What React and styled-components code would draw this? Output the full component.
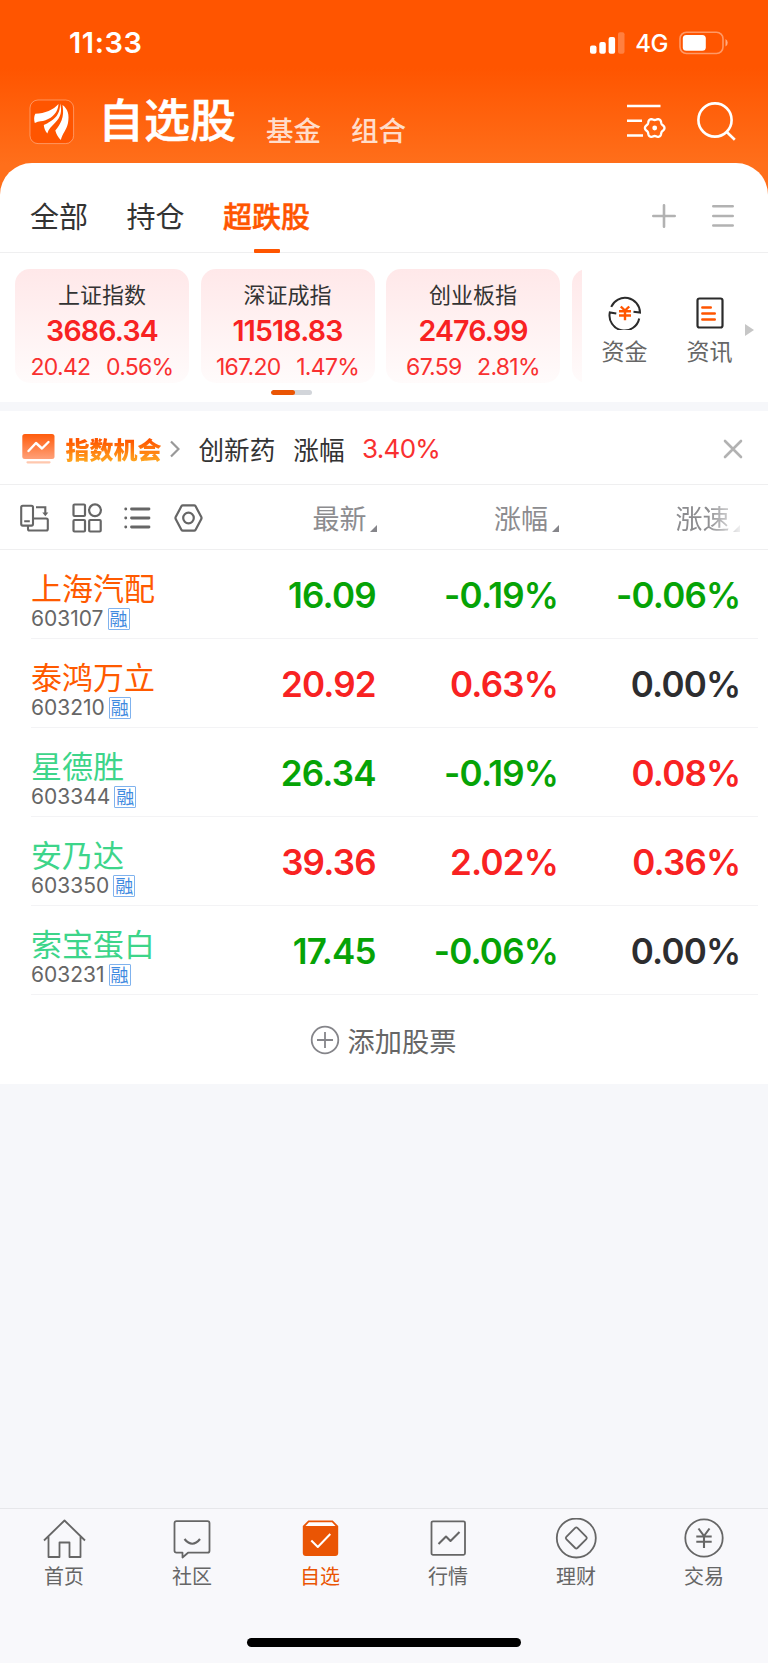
import React from "react";
import styled, { createGlobalStyle } from "styled-components";

const indices = [
  { name: "上证指数", value: "3686.34", change: "20.42", percent: "0.56%" },
  { name: "深证成指", value: "11518.83", change: "167.20", percent: "1.47%" },
  { name: "创业板指", value: "2476.99", change: "67.59", percent: "2.81%" },
];

const stocks = [
  { name: "上海汽配", code: "603107", color: "#ff5a00", values: [["16.09", "down"], ["-0.19%", "down"], ["-0.06%", "down"]] },
  { name: "泰鸿万立", code: "603210", color: "#ff5a00", values: [["20.92", "up"], ["0.63%", "up"], ["0.00%", "flat"]] },
  { name: "星德胜", code: "603344", color: "#3dd58a", values: [["26.34", "down"], ["-0.19%", "down"], ["0.08%", "up"]] },
  { name: "安乃达", code: "603350", color: "#3dd58a", values: [["39.36", "up"], ["2.02%", "up"], ["0.36%", "up"]] },
  { name: "索宝蛋白", code: "603231", color: "#3dd58a", values: [["17.45", "down"], ["-0.06%", "down"], ["0.00%", "flat"]] },
];

const valueColors = { up: "#f82222", down: "#06a306", flat: "#2d2d2f" };

// six-lobed outline of the settings gear
const gearPoints = (cx, cy, r, depth) => {
  const points = [];
  for (let deg = 0; deg < 360; deg += 5) {
    const t = (deg * Math.PI) / 180;
    const radius = r + depth * Math.cos(6 * t);
    points.push(`${(cx + radius * Math.cos(t)).toFixed(2)},${(cy + radius * Math.sin(t)).toFixed(2)}`);
  }
  return points.join(" ");
};

const SignalIcon = () => (
  <svg width="35" height="22" viewBox="0 0 35 22" fill="#fff">
    <rect x="0" y="13.5" width="6.5" height="8.3" rx="2" />
    <rect x="9.3" y="10" width="6.5" height="11.8" rx="2" />
    <rect x="18.6" y="5" width="6.5" height="16.8" rx="2" />
    <rect x="28" y="0.3" width="6.5" height="21.5" rx="2" opacity="0.25" />
  </svg>
);

const BatteryIcon = () => (
  <svg width="50" height="24" viewBox="0 0 50 24">
    <rect x="1" y="1.2" width="43" height="21.3" rx="6.5" fill="none" stroke="#fff" strokeOpacity="0.4" strokeWidth="1.6" />
    <rect x="3.8" y="4" width="23" height="15.8" rx="3.5" fill="#fff" />
    <path d="M46.5 8v7.6q2.2-1 2.2-3.8T46.5 8z" fill="#fff" fillOpacity="0.5" />
  </svg>
);

const LogoIcon = () => (
  <svg width="46" height="46" viewBox="0 0 46 46">
    <rect x="1" y="1" width="43.6" height="43.6" rx="8" fill="#ff5500" stroke="#fff" strokeOpacity="0.35" />
    <g fill="#fff">
      <path d="M6.3 14.8C16 14.3 24.5 11 29.500 5 29 13 24 18.500 16.500 21.300 13 22.500 10 22 5.800 24 4.800 20.500 5 17.500 6.300 14.800z" />
      <path d="M31 4.500C31.500 12 28 18.500 22 22 19 24 17 25 14.800 26c.3 3.200 1.300 6 3.500 8.500 1-4 4.500-7.500 8-11C31.500 18.500 33.500 12 31 4.500z" />
      <path d="M33.500 6C39 10 40.500 16 39 24c-1.500 7-5.500 10.500-7.200 17-2.500-2.500-4.500-5.500-5.500-9.500 5-6 9.500-13 7.200-25.500z" />
    </g>
  </svg>
);

const FilterSettingIcon = () => (
  <svg width="40" height="36" viewBox="0 0 40 36" fill="none" stroke="#fff" strokeWidth="2.6">
    <path d="M0 2h33.5M0 16.8h15M0 31.5h16" />
    <polygon points={gearPoints(27.7, 24, 8.9, 0.9)} strokeWidth="2.3" strokeLinejoin="round" />
    <circle cx="27.7" cy="24" r="2.4" fill="#fff" stroke="none" />
  </svg>
);

const SearchIcon = () => (
  <svg width="40" height="40" viewBox="0 0 40 40" fill="none" stroke="#fff" strokeWidth="2.6">
    <circle cx="18" cy="18" r="16.6" />
    <path d="M29.5 29.8l8.3 8" />
  </svg>
);

const PlusIcon = () => (
  <svg width="24" height="24" viewBox="0 0 24 24" stroke="#b2b2b2" strokeWidth="2.6" strokeLinecap="round">
    <path d="M1.3 12h21.4M12 1.3v21.4" />
  </svg>
);

const MenuIcon = () => (
  <svg width="22" height="24" viewBox="0 0 22 24" stroke="#b2b2b2" strokeWidth="2.6" strokeLinecap="round">
    <path d="M1.3 2.2h19.4M1.3 12h19.4M1.3 21.5h19.4" />
  </svg>
);

const FundIcon = () => (
  <svg width="34" height="34" viewBox="0 0 34 34" fill="none" stroke="#2b2b2b" strokeWidth="2">
    <path d="M3.2 10.9A15 15 0 0 1 32 16.5l-6.5-.8" />
    <path d="M31.2 22.5A15 15 0 0 1 1.8 16.5l6.5 1" />
    <path d="M12.8 10.5l4.200 4L21.200 10.500M11 15.200h12M11 19.500h12M17 14.500v9.800" stroke="#ff5500" strokeWidth="2.400" />
  </svg>
);

const NewsIcon = () => (
  <svg width="28" height="34" viewBox="0 -1 28 34" fill="none">
    <rect x="1.5" y="1.5" width="25" height="29" rx="2" stroke="#2b2b2b" strokeWidth="2.2" />
    <path d="M6.3 10.500h8.500M6.3 16.500h12.500M6.3 22.500h12.500" stroke="#ff5500" strokeWidth="2.400" strokeLinecap="round" />
  </svg>
);

const ChanceIcon = () => (
  <svg width="33" height="30" viewBox="0 0 33 30">
    <defs>
      <linearGradient id="chance" x1="0" y1="0" x2="0" y2="1">
        <stop offset="0" stopColor="#ff5c0c" />
        <stop offset="1" stopColor="#ffa079" />
      </linearGradient>
    </defs>
    <rect x="0.3" y="0" width="32.2" height="25" rx="2.5" fill="url(#chance)" />
    <path d="M6.5 17l7.5-8 6 5.500 6.500-6.500" fill="none" stroke="#fff" strokeWidth="2.4" strokeLinecap="round" strokeLinejoin="round" />
    <path d="M5.5 28.3h22" stroke="#ffc8ae" strokeWidth="2.2" strokeLinecap="round" />
  </svg>
);

const ChevronIcon = () => (
  <svg width="10" height="18" viewBox="0 0 10 18" fill="none" stroke="#999" strokeWidth="2.2">
    <path d="M1 1.500L8.500 9 1 16.500" />
  </svg>
);

const CloseIcon = () => (
  <svg width="20" height="20" viewBox="0 0 20 20" stroke="#b2b2b2" strokeWidth="2.6" strokeLinecap="round">
    <path d="M2 2l16 16M18 2L2 18" />
  </svg>
);

const RotateIcon = () => (
  <svg width="29" height="28" viewBox="0 0 29 28" fill="none" stroke="#666" strokeWidth="2.1">
    <rect x="1.2" y="1.800" width="11.800" height="19.800" rx="1.500" />
    <path d="M4.200 17.300h5.600M16 3.200h9.300v6.500M13.500 14.500H26.300q1.500 0 1.500 1.500v9q0 1.500-1.500 1.500H9.500Q8 26.500 8 25v-3" />
    <path d="M22.300 8.500h6l-3 3.800z" fill="#666" stroke="none" />
  </svg>
);

const GridIcon = () => (
  <svg width="30" height="30" viewBox="0 0 30 30" fill="none" stroke="#666" strokeWidth="2.2">
    <rect x="1.5" y="1.5" width="11.5" height="11.5" rx="1" />
    <circle cx="23" cy="7.3" r="5.9" />
    <rect x="1.5" y="17" width="11.5" height="11.5" rx="1" />
    <rect x="17.2" y="17" width="11.5" height="11.5" rx="1" />
  </svg>
);

const ListIcon = () => (
  <svg width="27" height="24" viewBox="0 0 27 24" stroke="#666" strokeWidth="2.8" strokeLinecap="round">
    <path d="M7.500 3h17.500M7.500 12h17.500M7.500 21h17.500M1.700 3h.1M1.700 12h.1M1.700 21h.1" />
  </svg>
);

const HexIcon = () => (
  <svg width="29" height="28" viewBox="0 0 29 28" fill="none" stroke="#666" strokeWidth="2.2">
    <path d="M8.800 1.300h11.400q.8 0 1.300.8l5.800 10.800q.5 1.100 0 2.200l-5.800 10.800q-.5.800-1.300.8H8.800q-.8 0-1.300-.8L1.700 15.100q-.5-1.100 0-2.200L7.500 2.100q.5-.8 1.300-.8z" />
    <circle cx="14.500" cy="14" r="5.300" />
  </svg>
);

const AddIcon = () => (
  <svg width="30" height="30" viewBox="0 0 30 30" fill="none" stroke="#85858a" strokeWidth="1.8">
    <circle cx="15" cy="15" r="13.300" />
    <path d="M7 15h16M15 7v16" />
  </svg>
);

const HomeIcon = () => (
  <path d="M2 22.500L22.500 2.500 43 22.500M6.500 18.500V39h11V24.500h10V39h11V18.500" />
);

const CommunityIcon = () => (
  <>
    <path d="M6.500 3.200h31q2 0 2 2v27.500q0 2-2 2H18L12.500 39.500v-4.800h-6q-2 0-2-2V5.200q0-2 2-2z" />
    <path d="M14.500 21q7.800 9.500 15.500 0" strokeWidth="2.200" />
  </>
);

const PickIcon = () => (
  <g stroke="none">
    <path d="M10.300 2.500h24.400l5.500 5.500v27q0 3-3 3H7.800q-3 0-3-3V8z" fill="#ea5504" />
    <path d="M11 4.200h23l3.500 3.800h-30z" fill="#fff" />
    <path d="M13.300 22.500l6.500 6.500L32.300 16" fill="none" stroke="#fff" strokeWidth="2" />
  </g>
);

const MarketIcon = () => (
  <>
    <rect x="5.500" y="3.300" width="33.500" height="33.500" rx="1.500" />
    <path d="M12.500 26l7.500-7.500 4.500 4.500 9-9" strokeWidth="2.100" />
  </>
);

const WealthIcon = () => (
  <>
    <circle cx="22.300" cy="20" r="19.500" />
    <path d="M21.200 9.900q1.100-1 2.200 0l8.900 8.900q1.100 1.200 0 2.300l-8.900 8.900q-1.100 1-2.200 0l-8.900-8.900q-1.100-1.100 0-2.300z" />
  </>
);

const TradeIcon = () => (
  <>
    <circle cx="22" cy="20" r="18.700" />
    <path d="M16.500 10.500l5.500 7.500 5.500-7.500M14.300 18.500h15.400M14.300 23.700h15.400M22 18v12" strokeWidth="2.100" />
  </>
);

const navItems = [
  { label: "首页", Icon: HomeIcon },
  { label: "社区", Icon: CommunityIcon },
  { label: "自选", Icon: PickIcon, active: true },
  { label: "行情", Icon: MarketIcon },
  { label: "理财", Icon: WealthIcon },
  { label: "交易", Icon: TradeIcon },
];

const App = () => {
  return (
    <Page>
      <GlobalStyle />
      <Header>
        <StatusBar>
          <Clock>11:33</Clock>
          <SignalIcon />
          <Network>4G</Network>
          <BatteryIcon />
        </StatusBar>
        <TitleBar>
          <LogoIcon />
          <Title>自选股</Title>
          <SubTitle>基金</SubTitle>
          <SubTitle>组合</SubTitle>
          <HeaderIcons>
            <FilterSettingIcon />
            <SearchIcon />
          </HeaderIcons>
        </TitleBar>
      </Header>

      <Sheet>
        <Tabs>
          <Tab>全部</Tab>
          <Tab>持仓</Tab>
          <Tab $active>超跌股</Tab>
          <TabIcons>
            <PlusIcon />
            <MenuIcon />
          </TabIcons>
        </Tabs>

        <IndexStrip>
          <IndexScroller>
            {indices.map((item) => (
              <IndexCard key={item.name}>
                <IndexName>{item.name}</IndexName>
                <IndexValue>{item.value}</IndexValue>
                <IndexChange>
                  <span>{item.change}</span>
                  <span>{item.percent}</span>
                </IndexChange>
              </IndexCard>
            ))}
            <IndexCard />
          </IndexScroller>
          <Shortcuts>
            <Shortcut>
              <FundIcon />
              <ShortcutLabel>资金</ShortcutLabel>
            </Shortcut>
            <Shortcut>
              <NewsIcon />
              <ShortcutLabel>资讯</ShortcutLabel>
            </Shortcut>
            <MoreArrow />
          </Shortcuts>
        </IndexStrip>
        <Pager><PagerThumb /></Pager>
      </Sheet>

      <Divider />

      <Chance>
        <ChanceIcon />
        <ChanceTitle>指数机会</ChanceTitle>
        <ChevronIcon />
        <ChanceText $left={18.5}>创新药</ChanceText>
        <ChanceText $left={18}>涨幅</ChanceText>
        <ChancePercent>3.40%</ChancePercent>
        <CloseIcon />
      </Chance>

      <TableHead>
        <Tools>
          <RotateIcon />
          <GridIcon />
          <ListIcon />
          <HexIcon />
        </Tools>
        <HeadCell>最新<SortMark /></HeadCell>
        <HeadCell>涨幅<SortMark /></HeadCell>
        <HeadCell $faded>涨速<SortMark /></HeadCell>
      </TableHead>

      <StockList>
        {stocks.map((stock) => (
          <StockRow key={stock.code}>
            <StockInfo>
              <StockName $color={stock.color}>{stock.name}</StockName>
              <StockCode>{stock.code}<Badge>融</Badge></StockCode>
            </StockInfo>
            {stock.values.map(([text, trend], i) => (
              <Value key={i} $trend={trend}>{text}</Value>
            ))}
          </StockRow>
        ))}
      </StockList>

      <AddStock>
        <AddIcon />
        添加股票
      </AddStock>

      <Filler />

      <Nav>
        <NavList>
          {navItems.map(({ label, Icon, active }) => (
            <NavItem key={label} $active={active}>
              <svg width="45" height="42" viewBox="0 0 45 42" fill="none" stroke="#666" strokeWidth="1.800" strokeLinejoin="round">
                <Icon />
              </svg>
              <NavLabel>{label}</NavLabel>
            </NavItem>
          ))}
        </NavList>
        <HomeBar />
      </Nav>
    </Page>
  );
};

export default App;

const cjk = `"Noto Sans CJK SC", sans-serif`;
const latin = `Inter, "Noto Sans CJK SC", sans-serif`;

const GlobalStyle = createGlobalStyle`
  * { box-sizing: border-box; }
  body { margin: 0; background: #f6f7fa; }
  svg { display: block; flex-shrink: 0; }
`;

const Page = styled.div`
  width: 768px;
  height: 1663px;
  display: flex;
  flex-direction: column;
  overflow: hidden;
  font-family: ${cjk};
  color: #333;
  background: #f6f7fa;
`;

const Header = styled.header`
  height: 203px;
  margin-bottom: -40px;
  flex-shrink: 0;
  background: linear-gradient(#ff5500 68px, #ff6f1b 165px);
`;

const StatusBar = styled.div`
  height: 85px;
  display: flex;
  align-items: center;
  padding: 0 39px 0 69px;
  color: #fff;
  font-family: ${latin};
`;

const Clock = styled.div`
  flex: 1;
  font-size: 29px;
  font-weight: 600;
  line-height: 36px;
  letter-spacing: 0.6px;
`;

const Network = styled.div`
  margin: 2px 11px 0 10px;
  font-size: 24px;
  font-weight: 500;
  line-height: 30px;
  letter-spacing: -0.5px;
`;

const TitleBar = styled.div`
  height: 73px;
  display: flex;
  align-items: center;
  padding: 0 31px 0 29px;
`;

const Title = styled.h1`
  margin: -10px 0 0 23px;
  font-size: 46px;
  font-weight: 500;
  line-height: 60px;
  color: #fff;
  -webkit-text-stroke: 0.5px #fff;
`;

const SubTitle = styled.div`
  margin: 15px 0 0 30px;
  font-size: 27.5px;
  line-height: 36px;
  font-weight: 500;
  color: rgba(255, 255, 255, 0.8);
`;

const HeaderIcons = styled.div`
  margin: 0 0 0 auto;
  display: flex;
  align-items: center;
  gap: 30px;
`;

const Sheet = styled.section`
  height: 238.5px;
  flex-shrink: 0;
  border-radius: 32px 32px 0 0;
  background: #fff;
`;

const Tabs = styled.div`
  height: 90px;
  display: flex;
  align-items: center;
  gap: 38.5px;
  padding: 17px 34px 0 30px;
  border-bottom: 1.5px solid #efeff0;
`;

const Tab = styled.div`
  height: 74px;
  display: flex;
  flex-direction: column;
  align-items: center;
  padding-top: 16px;
  font-size: 29px;
  line-height: 40px;
  font-weight: ${(props) => (props.$active ? 500 : 400)};
  color: ${(props) => (props.$active ? "#ff5500" : "#333")};
  -webkit-text-stroke: ${(props) => (props.$active ? "0.5px #ff5500" : "0")};

  &::after {
    content: "";
    width: 26px;
    height: 4px;
    margin-top: auto;
    border-radius: 1px;
    background: ${(props) => (props.$active ? "#ff5500" : "transparent")};
  }
`;

const TabIcons = styled.div`
  margin-left: auto;
  display: flex;
  gap: 36px;
`;

const IndexStrip = styled.div`
  display: flex;
  height: 130px;
  padding: 15.5px 0 0 15px;
`;

const IndexScroller = styled.div`
  width: 567px;
  height: 114.5px;
  display: flex;
  gap: 11.5px;
  overflow: hidden;
`;

const IndexCard = styled.div`
  width: 174px;
  height: 114.5px;
  flex-shrink: 0;
  display: flex;
  flex-direction: column;
  align-items: center;
  padding-top: 9px;
  border-radius: 15px;
  background: linear-gradient(#ffe8e9, #fffbfb);
`;

const IndexName = styled.div`
  font-size: 22px;
  line-height: 30px;
`;

const IndexValue = styled.div`
  margin-top: 6px;
  font-family: ${latin};
  font-size: 28.5px;
  font-weight: 600;
  line-height: 34px;
  letter-spacing: -0.8px;
  color: #f82222;
`;

const IndexChange = styled.div`
  margin-top: 5px;
  display: flex;
  gap: 15.5px;
  font-family: ${latin};
  font-size: 23px;
  line-height: 28px;
  letter-spacing: -0.7px;
  color: #f93030;
`;

const Shortcuts = styled.div`
  flex: 1;
  display: flex;
  align-items: center;
  padding: 9px 0 0 17.5px;
`;

const Shortcut = styled.div`
  width: 50px;
  margin-right: 35px;
  display: flex;
  flex-direction: column;
  align-items: center;
  justify-content: space-between;
  height: 69px;
`;

const ShortcutLabel = styled.div`
  font-size: 23px;
  line-height: 30px;
  color: #666;
`;

const MoreArrow = styled.i`
  margin-left: -25px;
  border: solid transparent;
  border-width: 6px 0 6px 9px;
  border-left-color: #c6c6c6;
`;

const Pager = styled.div`
  width: 41px;
  height: 4.5px;
  margin: 7px 0 0 271px;
  border-radius: 3px;
  overflow: hidden;
  background: #d2d5da;
`;

const PagerThumb = styled.div`
  width: 24px;
  height: 100%;
  border-radius: 3px;
  background: #ea5504;
`;

const Divider = styled.div`
  height: 9px;
  flex-shrink: 0;
  background: #f6f7fa;
`;

const Chance = styled.section`
  height: 74.5px;
  flex-shrink: 0;
  display: flex;
  align-items: center;
  padding: 3px 25px 0 22px;
  border-bottom: 1.5px solid #efeff0;
  background: #fff;

  > svg:last-child {
    margin-left: auto;
  }
`;

const ChanceTitle = styled.div`
  margin: 0 8.5px 0 10.5px;
  font-size: 24px;
  font-weight: 900;
  line-height: 36px;
  color: transparent;
  background: linear-gradient(#ff5500 25%, #ffa51f 85%);
  background-clip: text;
`;

const ChanceText = styled.div`
  margin-left: ${(props) => props.$left}px;
  font-size: 25.6px;
  line-height: 36px;
`;

const ChancePercent = styled.div`
  margin: 1px 0 0 17.5px;
  font-family: ${latin};
  font-size: 26px;
  line-height: 36px;
  letter-spacing: -0.7px;
  color: #f93030;
`;

const TableHead = styled.div`
  height: 64.5px;
  flex-shrink: 0;
  display: flex;
  align-items: center;
  padding: 2px 0 0 20px;
  border-bottom: 1.5px solid #efeff0;
  background: #fff;
`;

const Tools = styled.div`
  width: 183px;
  margin-right: -7.5px;
  display: flex;
  align-items: center;
  justify-content: space-between;
`;

const HeadCell = styled.div`
  width: 181.5px;
  display: flex;
  justify-content: flex-end;
  align-items: flex-end;
  font-size: 27px;
  line-height: 36px;
  color: #8c8c8f;
  mask-image: ${(props) => (props.$faded ? "linear-gradient(90deg, #000 148px, transparent 186px)" : "none")};
`;

const SortMark = styled.i`
  margin: 0 0 4px 3.5px;
  border: solid transparent;
  border-width: 0 0 7.5px 7.5px;
  border-bottom-color: #85858a;
`;

const StockList = styled.div`
  padding: 0 10px 0 31px;
  background: #fff;
`;

const StockRow = styled.div`
  height: 89px;
  display: flex;
  border-bottom: 1.5px solid #f3f3f5;
`;

const StockInfo = styled.div`
  width: 162.5px;
  padding-top: 17px;
`;

const StockName = styled.div`
  font-size: 31px;
  line-height: 40px;
  color: ${(props) => props.$color};
`;

const StockCode = styled.div`
  display: flex;
  align-items: center;
  margin-top: 0.5px;
  font-family: ${latin};
  font-size: 21px;
  line-height: 24px;
  color: #666;
`;

const Badge = styled.span`
  width: 22px;
  height: 22px;
  margin-left: 4px;
  border: 1.5px solid #7fb2ee;
  border-radius: 1px;
  font-family: ${cjk};
  font-size: 18px;
  line-height: 18px;
  text-align: center;
  color: #3f8ae0;
`;

const Value = styled.div`
  width: 182.3px;
  flex-shrink: 0;
  padding-top: 23px;
  text-align: right;
  font-family: ${latin};
  font-size: 35px;
  font-weight: 600;
  line-height: 44px;
  letter-spacing: -0.8px;
  color: ${(props) => valueColors[props.$trend]};
`;

const AddStock = styled.div`
  height: 89px;
  flex-shrink: 0;
  display: flex;
  align-items: center;
  justify-content: center;
  gap: 8px;
  padding: 2px 2px 0 0;
  font-size: 27.2px;
  color: #666;
  background: #fff;
`;

const Filler = styled.div`
  flex: 1;
`;

const Nav = styled.nav`
  height: 155.5px;
  flex-shrink: 0;
  border-top: 1.5px solid #e6e7ea;
  background: #f8f8fb;
`;

const NavList = styled.div`
  display: flex;
  padding-top: 9px;
`;

const NavItem = styled.div`
  flex: 1;
  display: flex;
  flex-direction: column;
  align-items: center;
  color: ${(props) => (props.$active ? "#ea5504" : "#666")};
`;

const NavLabel = styled.div`
  margin-top: 2px;
  font-size: 20px;
  line-height: 28px;
`;

const HomeBar = styled.div`
  width: 274px;
  height: 9.5px;
  margin: 48px auto 0;
  border-radius: 5px;
  background: #000;
`;
